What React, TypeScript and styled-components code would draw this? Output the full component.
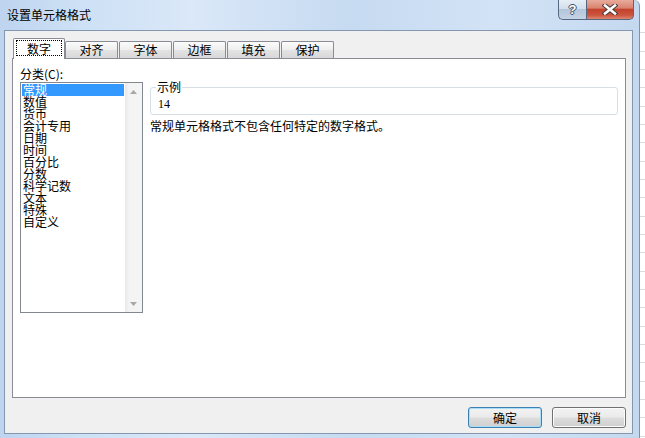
import React from "react";
import styled, { createGlobalStyle, css } from "styled-components";

const GlobalStyle = createGlobalStyle`
  html, body {
    margin: 0;
    padding: 0;
  }
  body {
    width: 645px;
    height: 438px;
    overflow: hidden;
    font-family: "Noto Sans CJK SC", "Liberation Sans", sans-serif;
    font-size: 12px;
    color: #000;
    background-color: #fff;
    background-image: repeating-linear-gradient(
      to bottom,
      transparent 0,
      transparent 17.33px,
      #d9dcdf 17.33px,
      #d9dcdf 18.33px
    );
    background-position: 0 15px;
  }
`;

const categories = [
  "常规",
  "数值",
  "货币",
  "会计专用",
  "日期",
  "时间",
  "百分比",
  "分数",
  "科学记数",
  "文本",
  "特殊",
  "自定义",
];

const tabs = ["数字", "对齐", "字体", "边框", "填充", "保护"];

function App() {
  return (
    <>
      <GlobalStyle />
      <Window>
        <TitleBar>
          <Title>设置单元格格式</Title>
          <CaptionButtons>
            <HelpButton>?</HelpButton>
            <CloseButton>
              <svg width="16" height="11" viewBox="0 0 16 11">
                <path d="M3 1.5 L13 9.5 M13 1.5 L3 9.5" stroke="#4a3a3a" strokeWidth="4.6" strokeLinecap="square" fill="none" />
                <path d="M3 1.5 L13 9.5 M13 1.5 L3 9.5" stroke="#fff" strokeWidth="2.6" strokeLinecap="square" fill="none" />
              </svg>
            </CloseButton>
          </CaptionButtons>
        </TitleBar>
        <Client>
          <TabStrip>
            {tabs.map((t, i) =>
              i === 0 ? (
                <Tab key={t} active>
                  <FocusRing>{t}</FocusRing>
                </Tab>
              ) : (
                <Tab key={t}>{t}</Tab>
              )
            )}
          </TabStrip>
          <TabPanel>
            <LeftColumn>
              <FieldLabel>分类(C):</FieldLabel>
              <ListBox>
                <ListItems>
                  {categories.map((c, i) => (
                    <ListItem key={c} selected={i === 0}>
                      {c}
                    </ListItem>
                  ))}
                </ListItems>
                <ScrollBar>
                  <ArrowButton>
                    <svg width="7" height="4" viewBox="0 0 7 4">
                      <path d="M0 4 L3.5 0 L7 4 Z" fill="#a7a7a7" />
                    </svg>
                  </ArrowButton>
                  <ArrowButton>
                    <svg width="7" height="4" viewBox="0 0 7 4">
                      <path d="M0 0 L7 0 L3.5 4 Z" fill="#a7a7a7" />
                    </svg>
                  </ArrowButton>
                </ScrollBar>
              </ListBox>
            </LeftColumn>
            <RightColumn>
              <GroupBox>
                <Legend>示例</Legend>
                <SampleValue>14</SampleValue>
              </GroupBox>
              <Description>常规单元格格式不包含任何特定的数字格式。</Description>
            </RightColumn>
          </TabPanel>
          <ButtonRow>
            <DialogButton isDefault>确定</DialogButton>
            <DialogButton>取消</DialogButton>
          </ButtonRow>
        </Client>
      </Window>
    </>
  );
}

const Window = styled.div`
  box-sizing: border-box;
  width: 640px;
  height: 438px;
  display: flex;
  flex-direction: column;
  padding: 0 5px 0 3px;
  border-right: 1px solid #7d91ab;
  border-top-right-radius: 6px;
  background: linear-gradient(
    90deg,
    #bed4ef 0%,
    #cde0f5 12%,
    #dae8f8 30%,
    #c6daf1 55%,
    #d3e3f6 78%,
    #c4d8ef 100%
  );
`;

const TitleBar = styled.div`
  height: 30px;
  display: flex;
  justify-content: space-between;
  align-items: flex-start;
`;

const Title = styled.div`
  align-self: center;
  padding-left: 4px;
  line-height: 14px;
  font-size: 12px;
  color: #000;
`;

const CaptionButtons = styled.div`
  display: flex;
`;

const captionBase = css`
  box-sizing: border-box;
  height: 20px;
  display: flex;
  align-items: center;
  justify-content: center;
  border: 1px solid #56677f;
  border-top: none;
`;

const HelpButton = styled.div`
  ${captionBase};
  width: 28px;
  border-right: none;
  border-bottom-left-radius: 5px;
  background: linear-gradient(
    to bottom,
    #e6eef7 0%,
    #d3dfec 45%,
    #b5c6db 50%,
    #c4d3e5 100%
  );
  font-family: "Liberation Sans", sans-serif;
  font-weight: bold;
  font-size: 13px;
  color: #fff;
  text-shadow: 1px 0 0 #3d4b60, -1px 0 0 #3d4b60, 0 1px 0 #3d4b60,
    0 -1px 0 #3d4b60;
`;

const CloseButton = styled.div`
  ${captionBase};
  width: 48px;
  border-bottom-right-radius: 5px;
  background: linear-gradient(
    to bottom,
    #e9ab9c 0%,
    #d98370 42%,
    #c3432d 50%,
    #cc553f 80%,
    #de8770 100%
  );
`;

const Client = styled.div`
  box-sizing: border-box;
  flex: 1;
  display: flex;
  flex-direction: column;
  margin: 0 1px 4px 1px;
  padding: 7px 6px 0 7px;
  border: 1px solid #8497b0;
  background: #f0f0f0;
`;

const TabStrip = styled.div`
  height: 20px;
  display: flex;
  align-items: flex-end;
  padding-left: 1px;
`;

const Tab = styled.div<{ active?: boolean }>`
  box-sizing: border-box;
  position: relative;
  width: 53px;
  height: 17px;
  margin-right: 1px;
  border: 1px solid #898c95;
  border-bottom: none;
  border-radius: 2px 2px 0 0;
  background: linear-gradient(
    to bottom,
    #fbfbfb 0%,
    #eeeeee 50%,
    #e3e3e3 52%,
    #d8d8d8 100%
  );
  text-align: center;
  line-height: 16px;

  ${({ active }) =>
    active &&
    css`
      width: 52px;
      height: 21px;
      margin-right: 0;
      margin-bottom: -1px;
      z-index: 2;
      background: #fff;
    `}
`;

const FocusRing = styled.span`
  display: block;
  box-sizing: border-box;
  height: 16px;
  margin: 1px 2px 0;
  padding-top: 1px;
  border: 1px dotted #000;
  line-height: 13px;
`;

const TabPanel = styled.div`
  box-sizing: border-box;
  height: 340px;
  display: flex;
  gap: 7px;
  padding: 8px 7px 0 7px;
  border: 1px solid #898c95;
  background: #fff;
`;

const LeftColumn = styled.div`
  width: 123px;
  display: flex;
  flex-direction: column;
`;

const FieldLabel = styled.div`
  line-height: 14px;
  margin-bottom: 1px;
`;

const ListBox = styled.div`
  box-sizing: border-box;
  height: 231px;
  display: flex;
  border: 1px solid #828790;
  background: #fff;
`;

const ListItems = styled.div`
  flex: 1;
  padding: 1px;
  display: flex;
  flex-direction: column;
`;

const ListItem = styled.div<{ selected?: boolean }>`
  height: 12px;
  line-height: 12px;
  padding-left: 1px;
  white-space: nowrap;
  ${({ selected }) =>
    selected &&
    css`
      background: #3399ff;
      color: #fff;
    `}
`;

const ScrollBar = styled.div`
  width: 17px;
  display: flex;
  flex-direction: column;
  justify-content: space-between;
  background: linear-gradient(to right, #e8e8e8, #f4f4f4 25%, #f4f4f4);
`;

const ArrowButton = styled.div`
  height: 17px;
  display: flex;
  align-items: center;
  justify-content: center;
`;

const RightColumn = styled.div`
  flex: 1;
  display: flex;
  flex-direction: column;
`;

const GroupBox = styled.fieldset`
  margin: 14px 0 0;
  padding: 0 5px 4px;
  min-width: 0;
  border: 1px solid #d5dfe5;
  border-radius: 3px;
`;

const Legend = styled.legend`
  padding: 0 1px;
  line-height: 12px;
  font-size: 12px;
`;

const SampleValue = styled.div`
  margin: 5px 0 0 2px;
  line-height: 12px;
  font-family: "Liberation Serif", "DejaVu Serif", serif;
  font-size: 12px;
`;

const Description = styled.div`
  margin-top: 5px;
  line-height: 12px;
`;

const ButtonRow = styled.div`
  display: flex;
  justify-content: flex-end;
  gap: 10px;
  margin-top: 9px;
`;

const DialogButton = styled.div<{ isDefault?: boolean }>`
  box-sizing: border-box;
  width: 74px;
  height: 21px;
  display: flex;
  align-items: center;
  justify-content: center;
  border: 1px solid #707070;
  border-radius: 3px;
  box-shadow: inset 0 0 0 1px #fbfbfb;
  background: linear-gradient(
    to bottom,
    #f2f2f2 0%,
    #ebebeb 48%,
    #dddddd 52%,
    #cfcfcf 100%
  );
  font-size: 12px;

  ${({ isDefault }) =>
    isDefault &&
    css`
      border-color: #3c7fb1;
      box-shadow: inset 0 0 0 1px #a8def7;
    `}
`;

export default App;
